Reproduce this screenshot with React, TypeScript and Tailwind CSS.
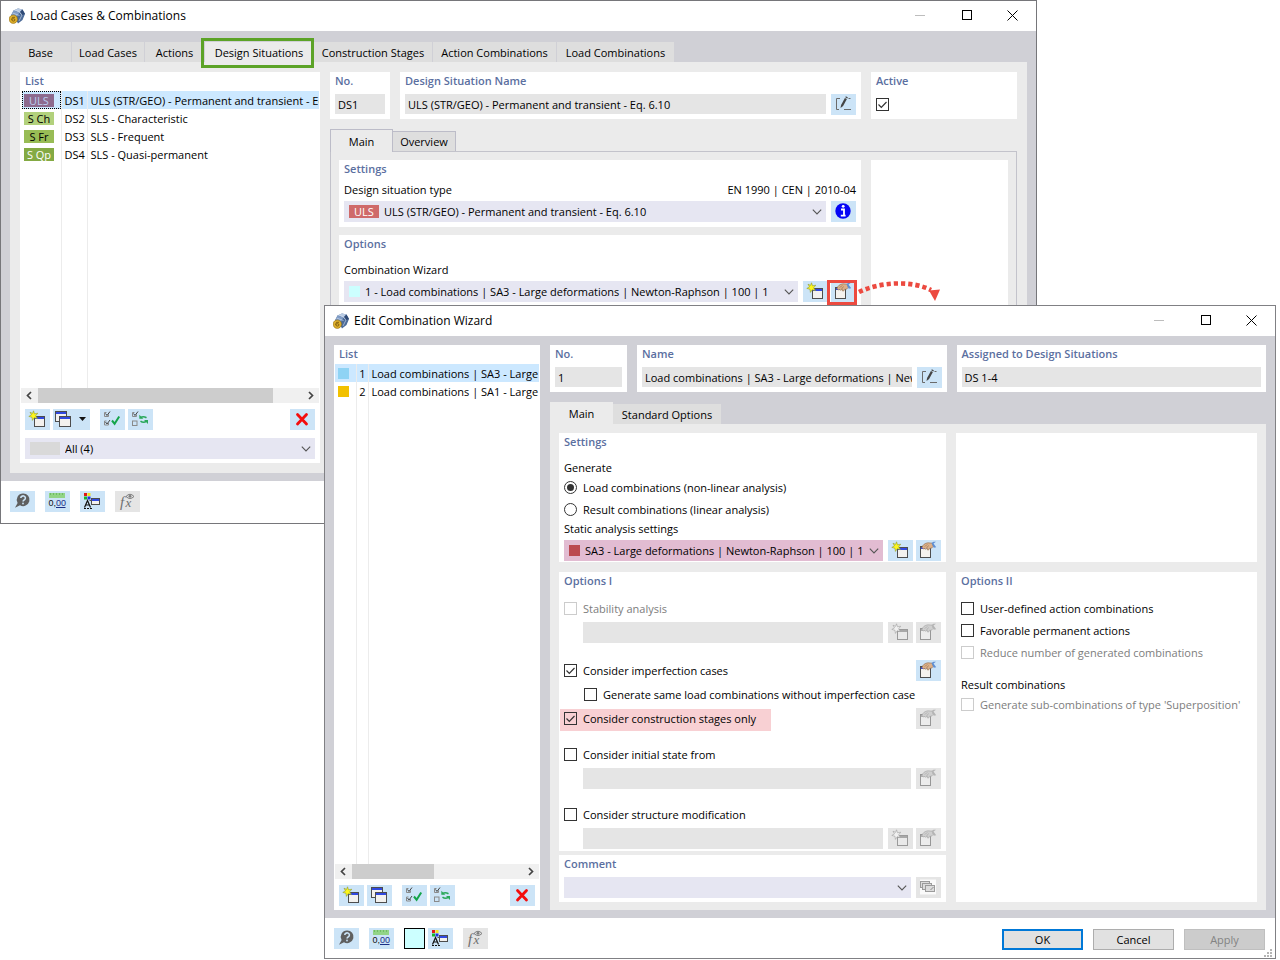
import { useId, type ReactNode } from "react";
import { clsx } from "clsx";

/* ---------- icons (all drawn on the 25x21 face of a tool button) ---------- */

function Face({ children, w = 25 }: { children: ReactNode; w?: number }) {
  return (
    <svg viewBox={`0 0 ${w} 21`} className="block h-full w-full" aria-hidden="true">
      {children}
    </svg>
  );
}

function MiniWindow({ x, y, w, h, off }: { x: number; y: number; w: number; h: number; off?: boolean }) {
  return (
    <g>
      <rect x={x} y={y} width={w} height={h} fill={off ? "#e9e9e9" : "#f3f1ee"} stroke={off ? "#9a9a9a" : "#4d4d4d"} />
      <rect x={x + 0.5} y={y + 0.5} width={w - 1} height="2" fill={off ? "#a8a8a8" : "#3149e0"} />
    </g>
  );
}

function NewIcon({ off }: { off?: boolean }) {
  return (
    <Face>
      <MiniWindow x={9.5} y={7.5} w={10} h={10} off={off} />
      <path
        d="M8.5 1.8 9.5 4.8 12.8 4.2 10.6 6.8 12.4 9.6 9.2 8.8 7.4 11.4 7 8.3 3.8 7.4 6.5 5.9 5 3.2 7.6 4.4Z"
        fill={off ? "#f0f0f0" : "#fdf61c"}
        stroke={off ? "#a0a0a0" : "#8f9a2a"}
        strokeWidth="0.6"
      />
    </Face>
  );
}

function CopyIcon({ w = 25 }: { w?: number }) {
  return (
    <Face w={w}>
      <MiniWindow x={w > 25 ? 2.5 : 4.5} y={2.5} w={11} h={10} />
      <MiniWindow x={w > 25 ? 6.5 : 8.5} y={7.5} w={11} h={10} />
      {w > 25 && <path d="M26 8h7l-3.500 4z" fill="#111" />}
    </Face>
  );
}

function TickBoxes({ both }: { both: boolean }) {
  return (
    <g fill="none">
      <path d="M4.500 3.500v4h4v-2M4.500 3.500h2" stroke="#8a8a8a" />
      <path d="M5.500 4.500l1.500 2 3-4" stroke="#444" />
      {both ? (
        <>
          <path d="M4.500 12v4h4v-2M4.500 12h2" stroke="#8a8a8a" />
          <path d="M5.500 13l1.500 2 3-4" stroke="#444" />
        </>
      ) : (
        <rect x="4.500" y="12" width="4.500" height="4.500" stroke="#8a8a8a" />
      )}
    </g>
  );
}

function CheckAllIcon() {
  return (
    <Face>
      <TickBoxes both />
      <path d="M12 11.500l2.600 3.200L19.200 7.500" fill="none" stroke="#15a54a" strokeWidth="2" />
    </Face>
  );
}

function InvertIcon() {
  return (
    <Face>
      <TickBoxes both={false} />
      <path d="M12.500 8.800q2.500-2.200 6 0" fill="none" stroke="#2aa85a" strokeWidth="1.600" />
      <path d="M11.300 5.800v4h4z" fill="#2aa85a" />
      <path d="M12.500 12.200q3 2.200 6 0" fill="none" stroke="#2aa85a" strokeWidth="1.600" />
      <path d="M20 15v-4h-4z" fill="#2aa85a" />
    </Face>
  );
}

function DeleteIcon() {
  return (
    <Face>
      <path d="M7.500 5.500l9 9.500M16.500 5.500l-9 9.500" stroke="#f40d0d" strokeWidth="2.800" strokeLinecap="round" />
    </Face>
  );
}

function HelpIcon() {
  return (
    <Face>
      <path d="M13 2.500a6.300 6.300 0 1 1-3 11.700L5 16.800l2.600-4.800A6.300 6.300 0 0 1 13 2.500z" fill="#5f5f5f" />
      <path d="M10.800 7a2.300 2.100 0 1 1 3.600 1.700c-.9.600-1.300.8-1.300 1.800" fill="none" stroke="#cce4f7" strokeWidth="1.600" />
      <circle cx="13" cy="12.500" r="0.900" fill="#cce4f7" />
    </Face>
  );
}

function DecimalsIcon() {
  return (
    <Face>
      <rect x="4" y="2" width="16" height="5" fill="#92d486" />
      <path d="M5.500 2v2M8.500 2v2M11.500 2v2M14.500 2v2M17.500 2v2" stroke="#6fbd64" />
      <text x="3.500" y="15" fontFamily="Liberation Sans, sans-serif" fontSize="9" fill="#111">0,</text>
      <text x="11" y="15" fontFamily="Liberation Sans, sans-serif" fontSize="9" fill="#1b2f86">00</text>
      <path d="M11 16.500h9.500" stroke="#1b2f86" />
    </Face>
  );
}

function StyleIcon() {
  return (
    <Face>
      <rect x="4" y="2" width="3" height="3" fill="#e11818" />
      <rect x="7.500" y="2" width="3" height="3" fill="#f2e21c" />
      <rect x="4" y="5.500" width="3" height="3" fill="#17b52c" />
      <rect x="7.500" y="5.500" width="3" height="3" fill="#2335d8" />
      <path d="M4.500 16.500L7.500 9.500l3 7M5.500 14h4" fill="none" stroke="#111" strokeWidth="1.200" />
      <path d="M4 17.500h8" stroke="#111" strokeDasharray="2 1" />
      <MiniWindow x={11.5} y={7.5} w={8} h={6} />
      <path d="M9.500 9.500h2" stroke="#555" />
    </Face>
  );
}

function FormulaIcon() {
  return (
    <Face>
      <text x="5" y="15.500" fontFamily="Liberation Serif, serif" fontStyle="italic" fontSize="15" fill="#6f6f6f">f</text>
      <text x="10.500" y="15.500" fontFamily="Liberation Serif, serif" fontStyle="italic" fontSize="13" fill="#6f6f6f">x</text>
      <path d="M11 5.500q4-4.500 8 0q-4 4-8 0z" fill="none" stroke="#7d7d7d" />
      <circle cx="15" cy="5.300" r="1.400" fill="#7d7d7d" />
    </Face>
  );
}

function HandIcon({ off }: { off?: boolean }) {
  return (
    <Face>
      <rect x="4.500" y="6.500" width="10" height="11" fill={off ? "#ececec" : "#f5f2ee"} stroke={off ? "#979797" : "#4d4d4d"} />
      <rect x="5" y="7" width="4" height="2" fill={off ? "#b0b0b0" : "#3149e0"} />
      <path
        d="M6 7.500C6.500 5 9 3 12 2.800l4.500.4.700 3.300c-1.200 1.800-2.500 2-3.700 1.700L12.700 10l-1.500-.2.200-2-1.700 1.400L8.600 8.600 7.300 9z"
        fill={off ? "#cfcfcf" : "#dcb088"}
        stroke={off ? "#a2a2a2" : "#8d6a4b"}
        strokeWidth="0.600"
      />
      <path d="M8.500 6.500l3-2M10.300 7.500l2.700-2" fill="none" stroke={off ? "#a2a2a2" : "#8d6a4b"} strokeWidth="0.500" />
      <path d="M15.500 3l2-1.200h2.500L17.500 3.600l2.700 3.700-2.500.4z" fill={off ? "#b5b5b5" : "#5f8fd2"} />
    </Face>
  );
}

function EditIcon() {
  return (
    <Face>
      <path d="M9 4.500H5.500v11H8M13 15.500h7M17.500 4.500h2" fill="none" stroke="#6b6b6b" />
      <path d="M9.500 14l.6-3 3.800-7 2 1.100-3.800 7z" fill="#444" />
      <path d="M14.300 3.300l.6-1 2 1.100-.6 1z" fill="#444" />
    </Face>
  );
}

function InfoIcon() {
  return (
    <Face>
      <circle cx="12" cy="10" r="7.700" fill="#0505f5" />
      <path d="M10 8.500h3v6M9.800 14.700h4.800" fill="none" stroke="#fff" strokeWidth="1.800" />
      <circle cx="12.200" cy="5.300" r="1.400" fill="#fff" />
    </Face>
  );
}

function CommentsIcon() {
  return (
    <Face>
      <rect x="4" y="2.500" width="16" height="15" fill="#fafafa" />
      <g fill="#dcdcdc" stroke="#9b9b9b">
        <rect x="4.500" y="4.500" width="9" height="6" />
        <rect x="6.500" y="6.500" width="9" height="6" />
        <rect x="9.500" y="8.500" width="9" height="6" />
      </g>
      <path d="M14.500 13l3-3" stroke="#8c8c8c" />
    </Face>
  );
}

function AppLogo() {
  return (
    <svg viewBox="0 0 16 16" className="h-4 w-4 shrink-0" aria-hidden="true">
      <path d="M4.500 2.500L9 .5l4.500 1L16 6l-2.500 6L9 15.500 6 10 2 7.500z" fill="#4c6b98" />
      <path d="M4.500 2.500L9 .5l4.500 1-3 3z" fill="#b9cbe4" />
      <path d="M10.500 4.500l3-3L16 6l-3 1z" fill="#2f4a76" />
      <path d="M4.500 2.500l6 2-2.500 4-6-1z" fill="#7f9cc6" />
      <path d="M10.500 4.500L13 7l-3 6M6.500 1.600l5.800 3.900M3.500 5l7 2.500" fill="none" stroke="#d6e1f0" strokeWidth="0.600" />
      <circle cx="4.300" cy="11.200" r="4.200" fill="#e0b12c" stroke="#8d6a14" strokeWidth="0.600" />
      <path d="M6 9.300q-3.300-1-3.300 2 0 1.800 1.700 1.800 1.500 0 1.500-1.200 0-1.300-1.500-1.200-1.300.1-1.600 1" fill="none" stroke="#7c5a0c" strokeWidth="0.900" />
    </svg>
  );
}

function Chevron() {
  return (
    <svg viewBox="0 0 10 6" className="pointer-events-none absolute top-1/2 right-1 -mt-[3px] h-1.5 w-2.5" aria-hidden="true">
      <path d="M.8.700L5 4.900 9.200.700" fill="none" stroke="#555" strokeWidth="1.100" />
    </svg>
  );
}

/* ------------------------------- controls -------------------------------- */

function Tool({ label, off, wide, children }: { label: string; off?: boolean; wide?: boolean; children: ReactNode }) {
  return (
    <button
      type="button"
      aria-label={label}
      disabled={off}
      className={clsx("h-[21px] shrink-0", wide ? "w-[37px]" : "w-[25px]", off ? "bg-[#e5e5e5]" : "bg-[#cce4f7]")}
    >
      {children}
    </button>
  );
}

function Check({ label, checked, disabled }: { label: string; checked?: boolean; disabled?: boolean }) {
  return (
    <label className={clsx("flex h-[18px] items-center gap-1.5 pb-px whitespace-nowrap", disabled && "text-[#7d7d7d]")}>
      <span className="relative h-[13px] w-[13px] shrink-0">
        <input
          type="checkbox"
          defaultChecked={checked}
          disabled={disabled}
          className="peer block h-[13px] w-[13px] appearance-none border border-[#333] disabled:border-[#ccc]"
        />
        <svg viewBox="0 0 13 13" className="pointer-events-none absolute inset-0 hidden peer-checked:block" aria-hidden="true">
          <path d="M2.500 6.500l2.800 2.800L10.500 4" fill="none" stroke="#333" strokeWidth="1.200" />
        </svg>
      </span>
      {label}
    </label>
  );
}

function Radio({ label, checked }: { label: string; checked?: boolean }) {
  return (
    <label className="flex h-[18px] items-center gap-1.5 pb-px whitespace-nowrap">
      <span className="relative h-[13px] w-[13px] shrink-0">
        <input
          type="radio"
          name="generate"
          defaultChecked={checked}
          className="peer block h-[13px] w-[13px] appearance-none rounded-full border border-[#333]"
        />
        <span className="pointer-events-none absolute inset-[3px] hidden rounded-full bg-[#333] peer-checked:block" />
      </span>
      {label}
    </label>
  );
}

function Picker({
  id,
  label,
  value,
  className,
  indent = "pl-[21px]",
  children,
}: {
  id?: string;
  label?: string;
  value: string;
  className?: string;
  indent?: string;
  children?: ReactNode;
}) {
  return (
    <div className={clsx("relative h-[21px] min-w-0 flex-1", className ?? "bg-[#e6e6f2]")}>
      <select id={id} aria-label={label} className={clsx("block h-full w-full appearance-none pr-4", indent)}>
        <option>{value}</option>
      </select>
      {children}
      <Chevron />
    </div>
  );
}

function Card({ title, className, children }: { title?: string; className?: string; children?: ReactNode }) {
  return (
    <section className={clsx("min-w-0 bg-white px-[5px]", className)}>
      {title && <h2 className="h-[18px] leading-[18px] font-semibold text-[#5b6f9f]">{title}</h2>}
      {children}
    </section>
  );
}

function Field({ title, value, className, edit }: { title: string; value: string; className?: string; edit?: boolean }) {
  const id = useId();
  return (
    <section className={clsx("min-w-0 bg-white px-[5px] pb-1", className)}>
      <label htmlFor={id} className="block h-[18px] leading-[18px] font-semibold text-[#5b6f9f]">
        {title}
      </label>
      <div className="mt-1 flex h-[21px] gap-[5px]">
        <input id={id} readOnly defaultValue={value} className="h-5 w-full min-w-0 flex-1 bg-[#e5e5e5] pl-[3px]" />
        {edit && (
          <Tool label="Edit name">
            <EditIcon />
          </Tool>
        )}
      </div>
    </section>
  );
}

function Tab({ children, active, className }: { children: ReactNode; active?: boolean; className?: string }) {
  return (
    <button
      type="button"
      role="tab"
      aria-selected={!!active}
      className={clsx("relative shrink-0 px-1 whitespace-nowrap", active ? "bg-[#ebebeb]" : "bg-[#dedede]", className)}
    >
      {children}
    </button>
  );
}

function TitleBar({ title }: { title: string }) {
  return (
    <header className="flex h-[30px] items-center bg-white pr-[18px] pb-px pl-2 text-[12px]">
      <AppLogo />
      <h1 className="ml-[5px] flex-1">{title}</h1>
      <div className="flex gap-[35px]">
        <button type="button" aria-label="Minimize" className="h-[11px] w-[11px]">
          <svg viewBox="0 0 11 11">
            <path d="M0 5.500h10" stroke="#bdbdbd" />
          </svg>
        </button>
        <button type="button" aria-label="Maximize" className="h-[11px] w-[11px]">
          <svg viewBox="0 0 11 11">
            <rect x="1.500" y="0.500" width="9" height="9" fill="none" stroke="#000" />
          </svg>
        </button>
        <button type="button" aria-label="Close" className="h-[11px] w-[11px]">
          <svg viewBox="0 0 11 11">
            <path d="M.5.500l10 10M10.500.500l-10 10" stroke="#000" />
          </svg>
        </button>
      </div>
    </header>
  );
}

function ScrollBar({ thumb }: { thumb: string }) {
  return (
    <div className="mx-px flex h-[15px] bg-[#f0f0f0]">
      <button type="button" aria-label="Scroll left" className="w-[17px]">
        <svg viewBox="0 0 17 15">
          <path d="M10 4L6.500 7.500 10 11" fill="none" stroke="#444" strokeWidth="1.700" />
        </svg>
      </button>
      <div className="flex-1">
        <div className={clsx("h-full bg-[#cdcdcd]", thumb)} />
      </div>
      <button type="button" aria-label="Scroll right" className="w-[17px]">
        <svg viewBox="0 0 17 15">
          <path d="M7 4l3.500 3.500L7 11" fill="none" stroke="#444" strokeWidth="1.700" />
        </svg>
      </button>
    </div>
  );
}

/* -------------------------- load cases window ---------------------------- */

const situations = [
  { tag: "ULS", tone: "bg-[#8d6a8e] text-[#b9cdf0]", no: "DS1", name: "ULS (STR/GEO) - Permanent and transient - Eq. 6.10" },
  { tag: "S Ch", tone: "bg-[#b2d17c] text-black", no: "DS2", name: "SLS - Characteristic" },
  { tag: "S Fr", tone: "bg-[#98bc55] text-black", no: "DS3", name: "SLS - Frequent" },
  { tag: "S Qp", tone: "bg-[#84aa43] text-white", no: "DS4", name: "SLS - Quasi-permanent" },
];

function SituationList() {
  return (
    <section className="w-[300px] shrink-0 bg-white pb-1">
      <h2 className="h-[19px] pl-[5px] leading-[18px] font-semibold text-[#5b6f9f]">List</h2>
      <table className="ml-0.5 w-[297px] table-fixed border-collapse">
        <colgroup>
          <col className="w-[39px]" />
          <col className="w-[26px]" />
          <col />
        </colgroup>
        <tbody>
          {situations.map((s, i) => (
            <tr key={s.no} className={clsx("h-[18px]", i === 0 && "bg-[#cce8ff]")}>
              <td className={clsx("border-r border-[#ececec] p-0", i === 0 && "outline-1 -outline-offset-1 outline-dotted outline-black")}>
                <span className={clsx("ml-0.5 block h-[13px] w-[30px] text-center leading-[13px]", s.tone)}>{s.tag}</span>
              </td>
              <td className="border-r border-[#ececec] p-0 pl-[3px] whitespace-nowrap">{s.no}</td>
              <td className="overflow-hidden p-0 pl-[3px] whitespace-nowrap">{s.name}</td>
            </tr>
          ))}
          <tr className="h-[225px]">
            <td className="border-r border-[#ececec]" />
            <td className="border-r border-[#ececec]" />
            <td />
          </tr>
        </tbody>
      </table>
      <ScrollBar thumb="w-[89%]" />
      <div className="mt-1.5 flex px-[5px]">
        <Tool label="New"><NewIcon /></Tool>
        <div className="ml-[3px] flex"><Tool label="Copy" wide><CopyIcon w={37} /></Tool></div>
        <div className="ml-2.5 flex gap-[3px]">
          <Tool label="Select all"><CheckAllIcon /></Tool>
          <Tool label="Invert selection"><InvertIcon /></Tool>
        </div>
        <div className="ml-auto flex"><Tool label="Delete"><DeleteIcon /></Tool></div>
      </div>
      <div className="mt-2 flex px-[5px]">
        <Picker label="Filter" value="All (4)" indent="pl-10">
          <span className="pointer-events-none absolute top-1 left-[5px] h-[13px] w-[30px] bg-[#d9d9d9]" />
        </Picker>
      </div>
    </section>
  );
}

function LoadCasesWindow() {
  return (
    <section className="absolute top-0 right-[243px] left-0 border border-[#76767a] bg-white">
      <TitleBar title="Load Cases & Combinations" />
      <div className="bg-[#d0d0d6] px-[9px] pt-[11px] pb-2">
        <div role="tablist" className="flex h-5 gap-px">
          <Tab className="w-[61px]">Base</Tab>
          <Tab className="w-[72px]">Load Cases</Tab>
          <Tab className="w-[59px]">Actions</Tab>
          <Tab active className="w-[108px]">
            Design Situations
            <span className="pointer-events-none absolute -top-1 -right-px -bottom-1.5 -left-1 z-10 border-3 border-[#5ca327]" />
          </Tab>
          <Tab className="w-[118px]">Construction Stages</Tab>
          <Tab className="w-[123px]">Action Combinations</Tab>
          <Tab className="w-[117px]">Load Combinations</Tab>
        </div>
        <div className="flex gap-2.5 bg-[#ebebeb] p-2.5">
          <SituationList />
          <div className="flex min-w-0 flex-1 flex-col">
            <div className="flex gap-2.5">
              <Field title="No." value="DS1" className="w-[60px] shrink-0" />
              <Field title="Design Situation Name" value="ULS (STR/GEO) - Permanent and transient - Eq. 6.10" edit className="flex-1" />
              <Card title="Active" className="w-[146px] shrink-0">
                <label className="mt-1.5 block h-[18px] w-[18px] overflow-hidden" title="Active">
                  <span className="sr-only">Active</span>
                  <Check label="" checked />
                </label>
              </Card>
            </div>
            <div role="tablist" className="mt-2.5 flex h-[22px] items-end">
              <Tab active className="z-10 -mb-px h-[23px] w-[63px] border border-b-0 border-[#bcbcc8]">Main</Tab>
              <Tab className="h-5 w-[63px] border border-l-0 border-b-0 border-[#bcbcc8]">Overview</Tab>
            </div>
            <div className="flex flex-1 gap-2.5 border border-[#c3c3cb] p-2">
              <div className="flex min-w-0 flex-1 flex-col gap-2">
                <Card title="Settings" className="pb-[5px]">
                  <div className="mt-[3px] flex h-[18px] items-center justify-between pb-px">
                    <label htmlFor="situation-type">Design situation type</label>
                    <span>EN 1990 | CEN | 2010-04</span>
                  </div>
                  <div className="mt-0.5 flex gap-[5px]">
                    <Picker id="situation-type" value="ULS (STR/GEO) - Permanent and transient - Eq. 6.10" indent="pl-10">
                      <span className="pointer-events-none absolute top-1 left-[5px] h-[13px] w-[30px] bg-[#cf6a6a] text-center leading-[13px] text-white">
                        ULS
                      </span>
                    </Picker>
                    <Tool label="Information"><InfoIcon /></Tool>
                  </div>
                </Card>
                <Card title="Options" className="flex-1">
                  <label htmlFor="wizard" className="mt-2 block h-[18px] leading-[18px]">Combination Wizard</label>
                  <div className="mt-0.5 flex">
                    <Picker id="wizard" value="1 - Load combinations | SA3 - Large deformations | Newton-Raphson | 100 | 1">
                      <span className="pointer-events-none absolute top-[5px] left-[5px] h-[11px] w-[11px] bg-[#ccffff]" />
                    </Picker>
                    <div className="ml-[5px] flex gap-[3px]">
                      <Tool label="New combination wizard"><NewIcon /></Tool>
                      <div className="relative flex">
                        <Tool label="Edit combination wizard"><HandIcon /></Tool>
                        <span className="pointer-events-none absolute -top-px -right-px -bottom-[3px] -left-1 border-3 border-[#ec4a40]" />
                        <svg viewBox="0 0 90 30" className="pointer-events-none absolute top-0 left-[25px] z-10 h-[30px] w-[90px] max-w-none" aria-hidden="true">
                          <path d="M3 11C24 1 55-1 75 9" fill="none" stroke="#ec4a40" strokeWidth="4.600" strokeDasharray="4.200 3" />
                          <path d="M73 9.500l11-1-5 11.500z" fill="#ec4a40" />
                        </svg>
                      </div>
                    </div>
                  </div>
                </Card>
              </div>
              <Card className="w-[137px] shrink-0" />
            </div>
          </div>
        </div>
      </div>
      <footer className="flex h-[42px] gap-2.5 px-[9px] pt-2.5">
        <Tool label="Help"><HelpIcon /></Tool>
        <Tool label="Units and decimal places"><DecimalsIcon /></Tool>
        <Tool label="Display properties"><StyleIcon /></Tool>
        <Tool label="Formula" off><FormulaIcon /></Tool>
      </footer>
    </section>
  );
}

/* ------------------------ combination wizard window ---------------------- */

const wizards = [
  { no: 1, tone: "bg-[#8fd3f4]", name: "Load combinations | SA3 - Large" },
  { no: 2, tone: "bg-[#f2c100]", name: "Load combinations | SA1 - Large" },
];

function WizardList() {
  return (
    <section className="flex w-[206px] shrink-0 flex-col bg-white pb-1">
      <h2 className="h-[19px] pl-[5px] leading-[18px] font-semibold text-[#5b6f9f]">List</h2>
      <table className="ml-px w-[204px] table-fixed border-collapse">
        <colgroup>
          <col className="w-[21px]" />
          <col className="w-3" />
          <col />
        </colgroup>
        <tbody>
          {wizards.map((w, i) => (
            <tr key={w.no} className={clsx("h-[18px]", i === 0 && "bg-[#cce8ff]")}>
              <td className="border-r border-[#ececec] p-0">
                <span className={clsx("ml-[3px] block h-[11px] w-[11px]", w.tone)} />
              </td>
              <td className="border-r border-[#ececec] p-0 pr-0.5 text-right">{w.no}</td>
              <td className="overflow-hidden p-0 pl-[3px] whitespace-nowrap">{w.name}</td>
            </tr>
          ))}
          <tr className="h-[464px]">
            <td className="border-r border-[#ececec]" />
            <td className="border-r border-[#ececec]" />
            <td />
          </tr>
        </tbody>
      </table>
      <ScrollBar thumb="w-[48%]" />
      <div className="mt-1.5 flex px-[5px]">
        <div className="flex gap-[3px]">
          <Tool label="New"><NewIcon /></Tool>
          <Tool label="Copy"><CopyIcon /></Tool>
        </div>
        <div className="ml-2.5 flex gap-[3px]">
          <Tool label="Select all"><CheckAllIcon /></Tool>
          <Tool label="Invert selection"><InvertIcon /></Tool>
        </div>
        <div className="ml-auto flex"><Tool label="Delete"><DeleteIcon /></Tool></div>
      </div>
    </section>
  );
}

function DisabledRow({ label, withNew }: { label: string; withNew?: boolean }) {
  return (
    <div className="mt-1 flex gap-[5px] pl-[19px]">
      <input aria-label={label} disabled className="h-[21px] w-full min-w-0 flex-1 bg-[#e5e5e5] px-1" />
      <div className="flex gap-[3px]">
        {withNew && <Tool label="New" off><NewIcon off /></Tool>}
        <Tool label="Edit" off><HandIcon off /></Tool>
      </div>
    </div>
  );
}

function WizardWindow() {
  return (
    <section className="absolute top-[305px] right-1 left-[324px] z-20 border border-[#808084] bg-white">
      <TitleBar title="Edit Combination Wizard" />
      <div className="flex gap-2.5 bg-[#d0d0d6] px-[9px] pt-[9px] pb-2">
        <WizardList />
        <div className="flex min-w-0 flex-1 flex-col">
          <div className="flex gap-2.5">
            <Field title="No." value="1" className="w-[77px] shrink-0" />
            <Field title="Name" value="Load combinations | SA3 - Large deformations | Newton-Raphson | 100 | 1" edit className="flex-1" />
            <Field title="Assigned to Design Situations" value="DS 1-4" className="flex-1" />
          </div>
          <div role="tablist" className="mt-2.5 flex h-[22px] items-end">
            <Tab active className="h-[22px] w-[63px]">Main</Tab>
            <Tab className="h-5 w-[108px]">Standard Options</Tab>
          </div>
          <div className="grid flex-1 grid-cols-[387fr_301fr] gap-x-2.5 bg-[#ebebeb] px-[9px] pt-[9px] pb-2">
            <div className="flex min-w-0 flex-col">
              <Card title="Settings" className="pb-px">
                <p className="mt-2 h-[18px] leading-[18px]">Generate</p>
                <div className="mt-0.5 flex flex-col gap-1">
                  <Radio label="Load combinations (non-linear analysis)" checked />
                  <Radio label="Result combinations (linear analysis)" />
                </div>
                <label htmlFor="static" className="mt-px block h-[18px] leading-[18px]">Static analysis settings</label>
                <div className="mt-0.5 flex gap-[5px]">
                  <Picker id="static" value="SA3 - Large deformations | Newton-Raphson | 100 | 1" className="bg-[#e2bcd2]">
                    <span className="pointer-events-none absolute top-[5px] left-[5px] h-[11px] w-[11px] bg-[#bb4a50]" />
                  </Picker>
                  <div className="flex gap-[3px]">
                    <Tool label="New settings"><NewIcon /></Tool>
                    <Tool label="Edit settings"><HandIcon /></Tool>
                  </div>
                </div>
              </Card>
              <Card title="Options I" className="mt-2.5 pb-0.5">
                <div className="mt-2.5"><Check label="Stability analysis" disabled /></div>
                <DisabledRow label="Stability analysis settings" withNew />
                <div className="mt-[17px] flex h-[21px] items-start justify-between">
                  <div className="pt-0.5"><Check label="Consider imperfection cases" checked /></div>
                  <Tool label="Edit imperfection cases"><HandIcon /></Tool>
                </div>
                <div className="mt-[5px] pl-5"><Check label="Generate same load combinations without imperfection case" /></div>
                <div className="mt-1 flex h-[21px] items-start justify-between">
                  <div className="mt-px -ml-1 bg-[#f8d0d3] pt-px pr-[15px] pb-[3px] pl-1"><Check label="Consider construction stages only" checked /></div>
                  <Tool label="Edit construction stages" off><HandIcon off /></Tool>
                </div>
                <div className="mt-[17px]"><Check label="Consider initial state from" /></div>
                <DisabledRow label="Initial state" />
                <div className="mt-[17px]"><Check label="Consider structure modification" /></div>
                <DisabledRow label="Structure modification" withNew />
              </Card>
              <Card title="Comment" className="mt-1 pb-1">
                <div className="mt-1 flex gap-[5px]">
                  <Picker label="Comment" value="" />
                  <Tool label="Comment library" off><CommentsIcon /></Tool>
                </div>
              </Card>
            </div>
            <div className="flex min-w-0 flex-col gap-2.5">
              <Card className="h-[129px]" />
              <Card title="Options II" className="flex-1">
                <div className="mt-2.5 flex flex-col gap-1">
                  <Check label="User-defined action combinations" />
                  <Check label="Favorable permanent actions" />
                  <Check label="Reduce number of generated combinations" disabled />
                </div>
                <p className="mt-3.5 h-[18px] leading-[18px]">Result combinations</p>
                <div className="mt-0.5"><Check label="Generate sub-combinations of type 'Superposition'" disabled /></div>
              </Card>
            </div>
          </div>
        </div>
      </div>
      <footer className="relative flex h-10 pt-2.5 pr-2.5 pl-[9px]">
        <div className="flex gap-2.5">
          <Tool label="Help"><HelpIcon /></Tool>
          <Tool label="Units and decimal places"><DecimalsIcon /></Tool>
          <div className="flex gap-[3px]">
            <button type="button" aria-label="Color" className="h-[21px] w-[21px] border border-black bg-[#ccffff]" />
            <Tool label="Display properties"><StyleIcon /></Tool>
          </div>
          <Tool label="Formula" off><FormulaIcon /></Tool>
        </div>
        <div className="mt-px ml-auto flex gap-2.5">
          <button type="button" className="h-[21px] w-[81px] border-2 border-[#0078d7] bg-[#e1e1e1]">OK</button>
          <button type="button" className="h-[21px] w-[81px] border border-[#adadad] bg-[#e1e1e1]">Cancel</button>
          <button type="button" disabled className="h-[21px] w-[81px] border border-[#bfbfbf] bg-[#cccccc] text-[#838383]">Apply</button>
        </div>
        <svg viewBox="0 0 9 9" className="absolute right-0.5 bottom-0 h-[9px] w-[9px]" aria-hidden="true">
          <path d="M6 0h2v2H6zM3 3h2v2H3zM6 3h2v2H6zM0 6h2v2H0zM3 6h2v2H3zM6 6h2v2H6z" fill="#b5b5b5" />
        </svg>
      </footer>
    </section>
  );
}

export default function App() {
  return (
    <main className="relative min-h-screen overflow-hidden bg-white font-['Open_Sans','Noto_Sans',sans-serif] text-[11px] leading-[15px] text-black">
      <LoadCasesWindow />
      <WizardWindow />
    </main>
  );
}
